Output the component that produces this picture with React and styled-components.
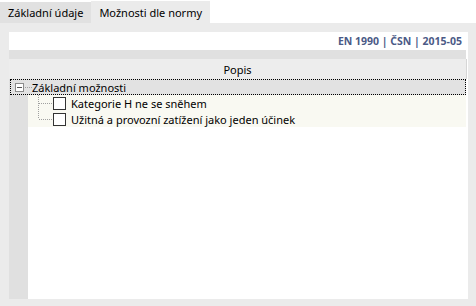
import React from "react";
import styled, { createGlobalStyle } from "styled-components";

const GlobalStyle = createGlobalStyle`
  html, body {
    margin: 0;
    padding: 0;
    background: #ffffff;
  }
  body {
    font-family: "Noto Sans", "Open Sans", sans-serif;
    font-size: 11px;
    color: #000;
  }
`;

const Window = styled.div`
  width: 476px;
  height: 306px;
  display: flex;
  flex-direction: column;
  overflow: hidden;
`;

const TabBar = styled.div`
  display: flex;
  align-items: flex-end;
  height: 23px;
  background: #ffffff;
`;

const Tab = styled.div`
  height: ${(p) => (p.active ? "22px" : "21px")};
  padding: 0 ${(p) => (p.active ? "8px" : "8px")};
  display: flex;
  align-items: center;
  background: ${(p) => (p.active ? "#ebebeb" : "#e1e1e1")};
  white-space: nowrap;
`;

const Panel = styled.div`
  flex: 1;
  background: #ebebeb;
  padding: 9px 8px 7px 9px;
  display: flex;
`;

const Frame = styled.div`
  flex: 1;
  display: flex;
  flex-direction: column;
  background: #ffffff;
`;

const InfoBar = styled.div`
  height: 18px;
  display: flex;
  align-items: center;
  justify-content: flex-end;
  padding-right: 4px;
  margin-right: 2px;
  background: #ffffff;
  color: #4b5a86;
  font-weight: bold;
  font-size: 10.5px;
`;

const Strip = styled.div`
  height: 9px;
  margin-right: 2px;
  background: #e0e0e0;
`;

const HeaderRow = styled.div`
  height: 20px;
  display: flex;
  align-items: center;
  justify-content: center;
  background: #ededed;
  border-right: 1px solid #d6d6d6;
  margin-right: 1px;
`;

const Body = styled.div`
  flex: 1;
  display: grid;
  grid-template-columns: 19px 1fr;
  background: #ffffff;
`;

const LeftColumn = styled.div`
  background: #e0e0e0;
`;

const Tree = styled.div`
  position: relative;
  padding-right: 2px;
`;

const Row = styled.div`
  height: 16px;
  display: flex;
  align-items: center;
  background: ${(p) => (p.group ? "#e2e2e2" : "#f9f9f2")};
  white-space: nowrap;
`;

const GroupRow = styled(Row)`
  margin-left: -18px;
  outline: 1px dotted #000;
  outline-offset: -1px;
`;

const Toggle = styled.span`
  width: 7px;
  height: 7px;
  margin-left: 5px;
  border: 1px solid #8c8c8c;
  background: #fff;
  position: relative;
  flex: none;
  &::after {
    content: "";
    position: absolute;
    left: 1px;
    right: 1px;
    top: 3px;
    height: 1px;
    background: #555;
  }
`;

const HDots = styled.span`
  width: ${(p) => p.w}px;
  margin-left: ${(p) => p.ml || 0}px;
  border-top: 1px dotted #a0a0a0;
  flex: none;
`;

const VDots = styled.span`
  position: absolute;
  left: 10px;
  top: 16px;
  height: 23px;
  border-left: 1px dotted #a0a0a0;
`;

const Check = styled.span`
  width: 11px;
  height: 11px;
  border: 1px solid #333;
  background: #fff;
  margin: 0 5px 0 1px;
  flex: none;
`;

const Label = styled.span`
  margin-left: ${(p) => p.ml || 0}px;
`;

const items = ["Kategorie H ne se sněhem", "Užitná a provozní zatížení jako jeden účinek"];

export default function App() {
  return (
    <Window>
      <GlobalStyle />
      <TabBar>
        <Tab>Základní údaje</Tab>
        <Tab active>Možnosti dle normy</Tab>
      </TabBar>
      <Panel>
        <Frame>
          <InfoBar>EN 1990 | ČSN | 2015-05</InfoBar>
          <Strip />
          <HeaderRow>Popis</HeaderRow>
          <Body>
            <LeftColumn />
            <Tree>
              <GroupRow group>
                <Toggle />
                <HDots w={7} ml={1} />
                <Label>Základní možnosti</Label>
              </GroupRow>
              <VDots />
              {items.map((t) => (
                <Row key={t}>
                  <HDots w={13} ml={11} />
                  <Check />
                  <Label>{t}</Label>
                </Row>
              ))}
            </Tree>
          </Body>
        </Frame>
      </Panel>
    </Window>
  );
}
